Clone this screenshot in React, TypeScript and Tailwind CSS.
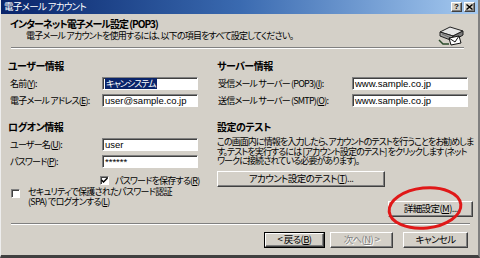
import React from "react";

const raised =
  "border border-t-white border-l-white border-b-[#404040] border-r-[#404040] shadow-[inset_-1px_-1px_0_#808080] bg-[#d4d0c8]";
const sunken =
  "border border-t-[#808080] border-l-[#808080] border-b-white border-r-white shadow-[inset_1px_1px_0_#404040] bg-white";

function Input({ w, children }: { w: string; children?: React.ReactNode }) {
  return (
    <div className={`${sunken} ${w} h-[13px] shrink-0 flex items-center pl-[2px] text-[9.5px] leading-none tracking-normal font-['Liberation_Sans',sans-serif] text-black overflow-hidden whitespace-nowrap`}>
      {children}
    </div>
  );
}

function Checkbox({ checked }: { checked?: boolean }) {
  return (
    <div className={`${sunken} w-[9px] h-[9px] flex items-center justify-center shrink-0`}>
      {checked && (
        <svg width="7" height="7" viewBox="0 0 7 7">
          <path d="M0.5 3 L2.5 5 L6.5 1" stroke="#000" strokeWidth="1.5" fill="none" />
        </svg>
      )}
    </div>
  );
}

function Button({ w, children, def, disabled }: { w: string; children: React.ReactNode; def?: boolean; disabled?: boolean }) {
  const inner = (
    <div className={`${raised} ${def ? "w-full h-full" : w + " h-[16px]"} flex items-center justify-center text-[9.5px] leading-none tracking-[-0.6px] whitespace-nowrap ${disabled ? "text-[#808080] [text-shadow:1px_1px_0_#fff]" : "text-black"}`}>
      {children}
    </div>
  );
  if (def) {
    return <div className={`${w} h-[16px] border border-black flex`}>{inner}</div>;
  }
  return inner;
}

function MailIcon() {
  return (
    <svg width="28" height="22" viewBox="0 0 28 22">
      <path d="M2 16 L6 20 L12 20" stroke="#2a4a2a" strokeWidth="1.5" fill="none" />
      <path d="M3 8 L13 3 L26 7 L16 12 Z" fill="#e6e6e6" stroke="#202020" strokeWidth="1" />
      <path d="M3 8 L3 12 L16 17 L16 12 Z" fill="#a0a0a0" stroke="#202020" strokeWidth="1" />
      <path d="M16 12 L26 7 L26 11 L16 17 Z" fill="#7a7a7a" stroke="#202020" strokeWidth="1" />
      <path d="M5 10 L14 14" stroke="#606060" strokeWidth="0.8" />
      <path d="M12 14 L22 12 L24 19 L14 21 Z" fill="#ffffff" stroke="#101010" strokeWidth="1" />
      <path d="M12 14 L18 18 L22 12" stroke="#101010" strokeWidth="1" fill="none" />
    </svg>
  );
}

export default function App() {
  return (
    <div className="w-[480px] h-[258px] bg-[#d4d0c8] flex flex-col relative overflow-hidden border-l border-l-[#eeeeee] border-r-2 border-r-[#808080] border-b-[3px] border-b-[#404040] font-['Noto_Sans_CJK_JP',sans-serif] [font-feature-settings:'palt'] text-black">
      {/* Title bar */}
      <div className="h-[14px] shrink-0 flex items-center justify-between bg-gradient-to-r from-[#0a246a] via-[#3a6ab0] to-[#a6caf0] pl-[3px] pr-[3px]">
        <span className="text-white text-[9.5px] leading-none tracking-[-0.7px]">電子メール アカウント</span>
        <div className="flex gap-[2px]">
          <div className={`${raised} w-[11px] h-[10px] flex items-center justify-center text-[8px] font-bold leading-none font-['Liberation_Sans',sans-serif]`}>?</div>
          <div className={`${raised} w-[11px] h-[10px] flex items-center justify-center`}>
            <svg width="7" height="6" viewBox="0 0 7 6">
              <path d="M0.5 0.5 L6.5 5.5 M6.5 0.5 L0.5 5.5" stroke="#000" strokeWidth="1.4" />
            </svg>
          </div>
        </div>
      </div>

      {/* Header */}
      <div className="h-[33px] shrink-0 flex justify-between pl-[9px] pr-[13px]">
        <div className="flex flex-col pt-[4px]">
          <div className="h-[12px] text-[10px] leading-[12px] font-bold tracking-[-1px] whitespace-nowrap">インターネット電子メール設定 (POP3)</div>
          <div className="h-[11px] text-[9px] leading-[11px] pl-[16px] tracking-[-0.8px] whitespace-nowrap">電子メール アカウントを使用するには、以下の項目をすべて設定してください。</div>
        </div>
        <div className="pt-[10px]">
          <MailIcon />
        </div>
      </div>
      <div className="mx-[10px] mr-[14px] h-[2px] border-t border-t-[#808080] border-b border-b-white shrink-0" />

      {/* Main */}
      <div className="h-[174px] shrink-0 flex text-[9px] leading-none tracking-[-0.8px] whitespace-nowrap">
        {/* Left column */}
        <div className="w-[216px] shrink-0 pl-[7px] flex flex-col">
          <div className="h-[12px] mt-[11px] flex items-center font-bold text-[10px] tracking-[-0.5px]">ユーザー情報</div>
          <div className="mt-[5px] flex items-center h-[13px]">
            <span className="w-[94px] pl-[2px]">名前(<u>Y</u>):</span>
            <Input w="w-[96px]">
              <span className="bg-[#0a246a] text-white font-['Noto_Sans_CJK_JP',sans-serif] text-[9px] leading-[11px] px-[1px] tracking-[-1px]">キャンシステム</span>
            </Input>
          </div>
          <div className="mt-[4px] flex items-center h-[13px]">
            <span className="w-[94px] pl-[2px]">電子メール アドレス(<u>E</u>):</span>
            <Input w="w-[96px]">user@sample.co.jp</Input>
          </div>
          <div className="h-[12px] mt-[14px] flex items-center font-bold text-[10px] tracking-[-0.5px]">ログオン情報</div>
          <div className="mt-[5px] flex items-center h-[13px]">
            <span className="w-[94px] pl-[2px]">ユーザー名(<u>U</u>):</span>
            <Input w="w-[96px]">user</Input>
          </div>
          <div className="mt-[4px] flex items-center h-[13px]">
            <span className="w-[94px] pl-[2px]">パスワード(<u>P</u>):</span>
            <Input w="w-[96px]">******</Input>
          </div>
          <div className="mt-[7px] h-[10px] flex items-center pl-[92px] gap-[6px]">
            <Checkbox checked />
            <span>パスワードを保存する(<u>R</u>)</span>
          </div>
          <div className="mt-[2px] flex items-start pl-[3px] gap-[8px]">
            <div className="mt-[2px]"><Checkbox /></div>
            <div className="flex flex-col leading-[10px] tracking-[-0.7px]">
              <span>セキュリティで保護されたパスワード認証</span>
              <span>(SPA) でログオンする(<u>L</u>)</span>
            </div>
          </div>
        </div>

        {/* Right column */}
        <div className="flex-1 flex flex-col pr-[10px]">
          <div className="h-[12px] mt-[11px] flex items-center font-bold text-[10px] tracking-[-0.5px]">サーバー情報</div>
          <div className="mt-[5px] flex items-center h-[13px]">
            <span className="w-[135px] pl-[1px]">受信メール サーバー (POP3)(<u>I</u>):</span>
            <Input w="w-[116px]">www.sample.co.jp</Input>
          </div>
          <div className="mt-[4px] flex items-center h-[13px]">
            <span className="w-[135px] pl-[1px]">送信メール サーバー (SMTP)(<u>O</u>):</span>
            <Input w="w-[116px]">www.sample.co.jp</Input>
          </div>
          <div className="h-[12px] mt-[14px] flex items-center font-bold text-[10px] tracking-[-0.5px]">設定のテスト</div>
          <div className="mt-[4px] leading-[9.5px] tracking-[-0.9px]">
            この画面内に情報を入力したら、アカウントのテストを行うことをお勧めしま<br />
            す。テストを実行するには [アカウント設定のテスト] をクリックします (ネット<br />
            ワークに接続されている必要があります)。
          </div>
          <div className="mt-[5px]">
            <Button w="w-[168px]">アカウント設定のテスト(<u>T</u>)...</Button>
          </div>
          <div className="mt-[14px] flex justify-end">
            <Button w="w-[85px]">詳細設定(<u>M</u>)...</Button>
          </div>
        </div>
      </div>

      {/* bottom separator */}
      <div className="mx-[10px] mr-[8px] h-[2px] border-t border-t-[#808080] border-b border-b-white shrink-0" />

      {/* Buttons */}
      <div className="mt-[7px] flex justify-end pr-[10px]">
        <Button w="w-[61px]" def>&lt; 戻る(<u>B</u>)</Button>
        <div className="w-[5px]" />
        <Button w="w-[63px]" disabled>次へ(<u>N</u>) &gt;</Button>
        <div className="w-[10px]" />
        <Button w="w-[65px]">キャンセル</Button>
      </div>

      {/* red circle annotation */}
      <svg className="absolute left-[380px] top-[184px]" width="90" height="50" viewBox="0 0 90 50">
        <ellipse cx="44" cy="24" rx="36" ry="20" transform="rotate(-6 44 24)" fill="none" stroke="#e01818" strokeWidth="3" />
      </svg>
    </div>
  );
}
